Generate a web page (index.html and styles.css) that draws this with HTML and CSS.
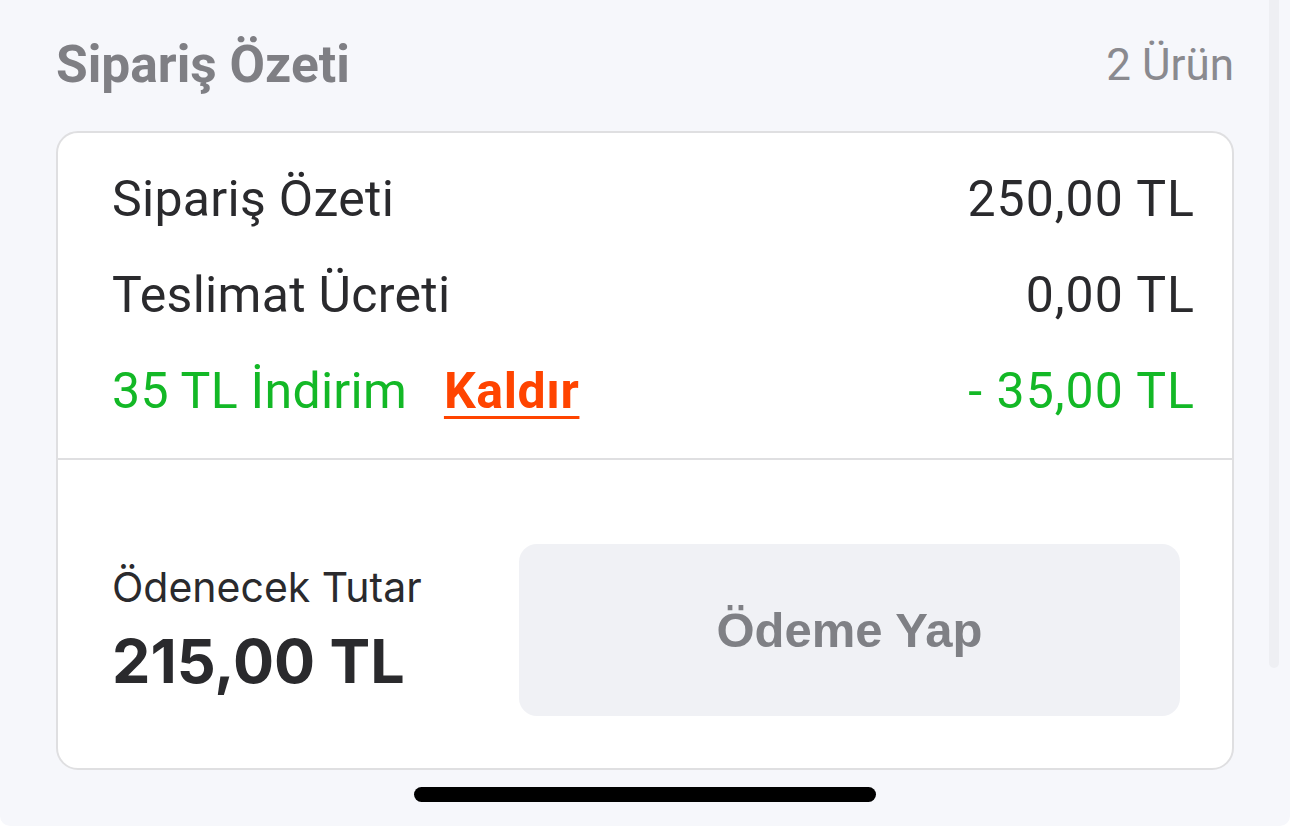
FILE: index.html
```html
<!DOCTYPE html>
<html lang="tr">
<head>
<meta charset="utf-8">
<title>Sipariş Özeti</title>
<link rel="stylesheet" href="styles.css">
</head>
<body>
<div class="screen">
  <div class="scrollbar"></div>
  <div class="header">
    <h1 class="title">Sipariş Özeti</h1>
    <span class="count">2 Ürün</span>
  </div>
  <div class="card">
    <div class="rows">
      <div class="row">
        <span class="label">Sipariş Özeti</span>
        <span class="value">250,00 TL</span>
      </div>
      <div class="row">
        <span class="label">Teslimat Ücreti</span>
        <span class="value">0,00 TL</span>
      </div>
      <div class="row discount">
        <span class="label">35 TL İndirim <a class="remove" href="#">Kaldır</a></span>
        <span class="value">- 35,00 TL</span>
      </div>
    </div>
    <div class="footer">
      <div class="total">
        <div class="total-label">Ödenecek Tutar</div>
        <div class="total-value">215,00 TL</div>
      </div>
      <button class="pay" type="button">Ödeme Yap</button>
    </div>
  </div>
  <div class="home-indicator"></div>
</div>
</body>
</html>
```
FILE: styles.css
```css
html { background: #ffffff; }
body { margin: 0; }
.screen {
  position: relative;
  height: 826px;
  background: #f6f7fb;
  border-radius: 0 0 10px 10px;
  overflow: hidden;
  padding: 0 56px;
  box-sizing: border-box;
  font-family: Roboto, "Liberation Sans", sans-serif;
  color: #2a2a2d;
}
.scrollbar {
  position: absolute;
  right: 11px;
  top: 0;
  width: 10px;
  height: 668px;
  border-radius: 0 0 5px 5px;
  background: #eeeff3;
}
.header {
  display: flex;
  justify-content: space-between;
  align-items: baseline;
  padding-top: 34px;
  height: 61px;
  margin-bottom: 36px;
}
.title {
  margin: 0;
  font-size: 51.5px;
  font-weight: 700;
  line-height: 61px;
  color: #7f7f84;
}
.count {
  font-size: 44px;
  color: #8a8a8f;
  position: relative;
  top: -2px;
}
.card {
  background: #ffffff;
  border: 2px solid #dfdfe1;
  border-radius: 22px;
}
.rows {
  padding: 18px 38px 19px 54px;
  border-bottom: 2px solid #dfdfe1;
}
.row {
  display: flex;
  justify-content: space-between;
  font-size: 50px;
  line-height: 96px;
}
.label { letter-spacing: 0.3px; }
.value { letter-spacing: 1px; margin-right: -1px; }
.discount { color: #13b826; }
.remove {
  margin-left: 24px;
  color: #ff4400;
  font-weight: 700;
  letter-spacing: 0.6px;
  text-decoration: underline;
  text-decoration-thickness: 3px;
  text-underline-offset: 8px;
}
.footer {
  display: flex;
  justify-content: space-between;
  align-items: center;
  padding: 84px 52px 52px 54px;
}
.total {
  font-family: Inter, "Liberation Sans", sans-serif;
  padding-top: 4px;
}
.total-label {
  font-size: 41px;
  line-height: 48px;
  margin-bottom: 10px;
  color: #2a2a2d;
}
.total-value {
  font-size: 61px;
  font-weight: 700;
  line-height: 80px;
  color: #2a2a2d;
}
.pay {
  width: 661px;
  height: 172px;
  border: none;
  border-radius: 18px;
  background: #f0f1f5;
  color: #7f8085;
  font-family: "Liberation Sans", Arial, sans-serif;
  font-weight: 700;
  font-size: 49px;
  padding: 0;
}
.home-indicator {
  width: 462px;
  height: 15px;
  border-radius: 8px;
  background: #000000;
  margin: 17px auto 0;
}
```
